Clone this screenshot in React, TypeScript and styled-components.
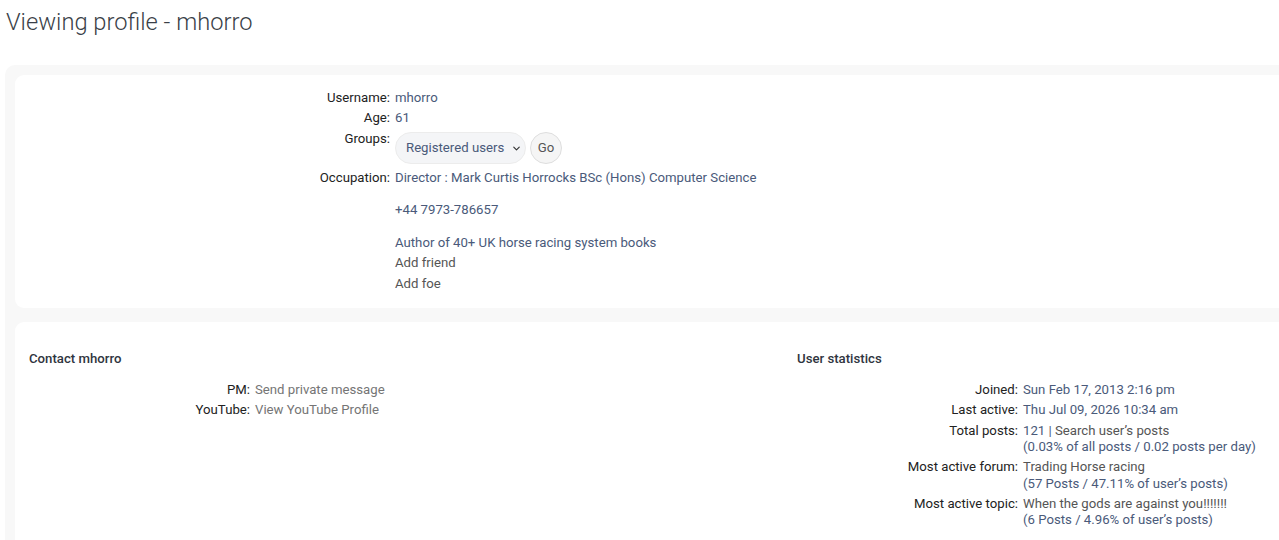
import React from "react";
import styled, { createGlobalStyle } from "styled-components";
import { ChevronDown } from "lucide-react";

const GlobalStyle = createGlobalStyle`
    html, body {
        margin: 0;
        padding: 0;
        background: #ffffff;
        overflow: hidden;
    }
    body {
        font-family: Roboto, "Liberation Sans", Arial, sans-serif;
        font-size: 13.2px;
        color: #222;
    }
`;

const Page = styled.div`
    width: 1590px;
    padding: 8px 5px 0 5px;
`;

const Title = styled.h2`
    margin: 0 0 28px 1px;
    font-size: 23.7px;
    font-weight: 300;
    line-height: 29px;
    color: #3a3f48;
`;

const Panel = styled.div`
    background: #f8f8f8;
    border-radius: 10px;
    padding: 10px;
    display: flex;
    flex-direction: column;
    gap: 14px;
`;

const Card = styled.div<{ $pad: string }>`
    background: #ffffff;
    border-radius: 9px;
    padding: ${(p) => p.$pad};
`;

const Columns = styled.div`
    display: grid;
    grid-template-columns: 768px 768px;
`;

const Heading = styled.h3`
    margin: 0 0 15px 0;
    font-size: 13.2px;
    font-weight: 500;
    line-height: 16px;
    color: #2f3540;
`;

const Details = styled.dl<{ $label: number }>`
    margin: 0;
    display: grid;
    grid-template-columns: ${(p) => p.$label}px 1fr;
    column-gap: 5px;
    row-gap: 4.1px;
    line-height: 16.3px;
`;

const Label = styled.dt`
    text-align: right;
    color: #222;
    white-space: nowrap;
`;

const Value = styled.dd<{ $tone?: "link" | "muted" | "dark" }>`
    margin: 0;
    white-space: nowrap;
    color: ${(p) =>
        p.$tone === "muted" ? "#757575" : p.$tone === "dark" ? "#555" : "#4a5a7a"};
`;

const Dark = styled.span`
    color: #555;
`;

const Action = styled.div`
    color: #555;
    margin-top: 4px;
`;

const GroupForm = styled.form`
    display: flex;
    align-items: center;
    gap: 4px;
    margin: 1px 0 2px 0;
`;

const SelectWrap = styled.div`
    position: relative;
    display: flex;
`;

const Select = styled.select`
    appearance: none;
    height: 32px;
    width: 131px;
    padding: 0 18px 0 10px;
    border: 1px solid #ececec;
    border-radius: 16px;
    background: #f4f5f7;
    font-family: Roboto, "Liberation Sans", Arial, sans-serif;
    font-size: 13.2px;
    color: #4a5a7a;
`;

const Chevron = styled(ChevronDown)`
    position: absolute;
    right: 4px;
    top: 11px;
    pointer-events: none;
    color: #333;
`;

const GoButton = styled.button`
    width: 32px;
    height: 32px;
    border-radius: 50%;
    border: 1px solid #dedede;
    background: #f5f5f5;
    padding: 0;
    font-family: Roboto, "Liberation Sans", Arial, sans-serif;
    font-size: 13.2px;
    color: #555;
`;

const App = () => {
    return (
        <Page>
            <GlobalStyle />
            <Title>Viewing profile - mhorro</Title>
            <Panel>
                <Card $pad="15px 14px 16px 14px">
                    <Details $label={361}>
                        <Label>Username:</Label>
                        <Value>mhorro</Value>
                        <Label>Age:</Label>
                        <Value>61</Value>
                        <Label>Groups:</Label>
                        <Value>
                            <GroupForm onSubmit={(e) => e.preventDefault()}>
                                <SelectWrap>
                                    <Select defaultValue="reg">
                                        <option value="reg">Registered users</option>
                                    </Select>
                                    <Chevron size={11} strokeWidth={2.5} />
                                </SelectWrap>
                                <GoButton type="submit">Go</GoButton>
                            </GroupForm>
                        </Value>
                        <Label>Occupation:</Label>
                        <Value>
                            Director : Mark Curtis Horrocks BSc (Hons) Computer Science
                            <br />
                            <br />
                            +44 7973-786657
                            <br />
                            <br />
                            Author of 40+ UK horse racing system books
                            <Action>Add friend</Action>
                            <Action>Add foe</Action>
                        </Value>
                    </Details>
                </Card>
                <Card $pad="29px 14px 60px 14px">
                    <Columns>
                        <div>
                            <Heading>Contact mhorro</Heading>
                            <Details $label={221}>
                                <Label>PM:</Label>
                                <Value $tone="muted">Send private message</Value>
                                <Label>YouTube:</Label>
                                <Value $tone="muted">View YouTube Profile</Value>
                            </Details>
                        </div>
                        <div>
                            <Heading>User statistics</Heading>
                            <Details $label={221}>
                                <Label>Joined:</Label>
                                <Value>Sun Feb 17, 2013 2:16 pm</Value>
                                <Label>Last active:</Label>
                                <Value>Thu Jul 09, 2026 10:34 am</Value>
                                <Label>Total posts:</Label>
                                <Value>
                                    121 | <Dark>Search user’s posts</Dark>
                                    <br />
                                    (0.03% of all posts / 0.02 posts per day)
                                </Value>
                                <Label>Most active forum:</Label>
                                <Value>
                                    <Dark>Trading Horse racing</Dark>
                                    <br />
                                    (57 Posts / 47.11% of user’s posts)
                                </Value>
                                <Label>Most active topic:</Label>
                                <Value>
                                    <Dark>When the gods are against you!!!!!!!</Dark>
                                    <br />
                                    (6 Posts / 4.96% of user’s posts)
                                </Value>
                            </Details>
                        </div>
                    </Columns>
                </Card>
            </Panel>
        </Page>
    );
};

export default App;
